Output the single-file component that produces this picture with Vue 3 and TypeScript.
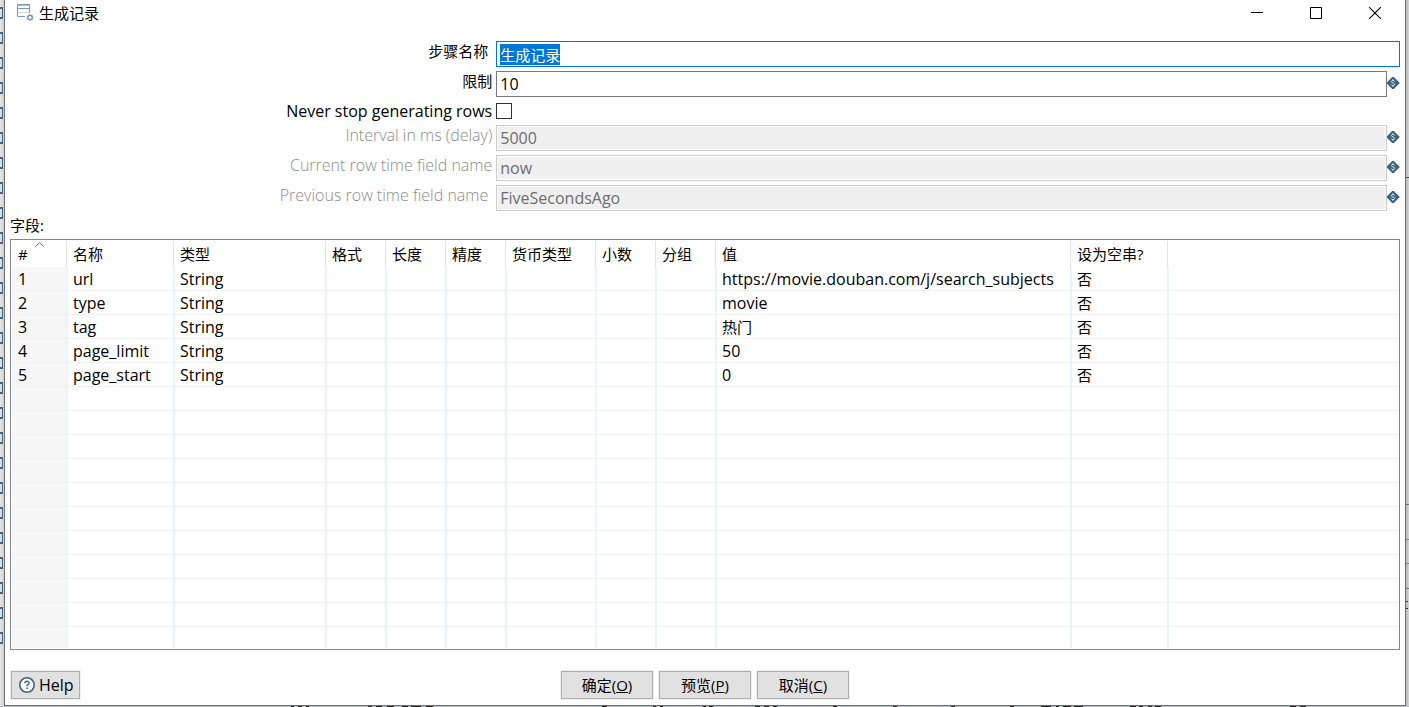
<script setup lang="ts">
import { onMounted, ref } from 'vue'

interface Column {
  key: string
  title: string
}
type Row = Record<string, string>

const columns: Column[] = [
  { key: 'num', title: '#' },
  { key: 'name', title: '名称' },
  { key: 'type', title: '类型' },
  { key: 'format', title: '格式' },
  { key: 'length', title: '长度' },
  { key: 'precision', title: '精度' },
  { key: 'currency', title: '货币类型' },
  { key: 'decimal', title: '小数' },
  { key: 'group', title: '分组' },
  { key: 'value', title: '值' },
  { key: 'empty', title: '设为空串?' },
  { key: 'rest', title: '' },
]

const fields: Row[] = [
  { num: '1', name: 'url', type: 'String', value: 'https://movie.douban.com/j/search_subjects', empty: '否' },
  { num: '2', name: 'type', type: 'String', value: 'movie', empty: '否' },
  { num: '3', name: 'tag', type: 'String', value: '热门', empty: '否' },
  { num: '4', name: 'page_limit', type: 'String', value: '50', empty: '否' },
  { num: '5', name: 'page_start', type: 'String', value: '0', empty: '否' },
]
const blankRows: Row[] = Array.from({ length: 11 }, () => ({}))
const rows: Row[] = [...fields, ...blankRows]

const isLatin = (text: string | undefined): boolean => /^[\x20-\x7e]+$/.test(text ?? '')

const stepName = ref('生成记录')
const limit = ref('10')
const neverStop = ref(false)
const timing = ref([
  { id: 'interval', label: 'Interval in ms (delay)', value: '5000', inset: false },
  { id: 'current', label: 'Current row time field name', value: 'now', inset: false },
  { id: 'previous', label: 'Previous row time field name', value: 'FiveSecondsAgo', inset: true },
])

const actions = [
  { text: '确定', key: 'O' },
  { text: '预览', key: 'P' },
  { text: '取消', key: 'C' },
]

const nameInput = ref<HTMLInputElement | null>(null)
onMounted(() => {
  nameInput.value?.focus()
  nameInput.value?.select()
})
</script>

<template>
  <div class="desktop">
    <div class="strip-left" aria-hidden="true">
      <i v-for="n in 26" :key="n"></i>
    </div>

    <main class="dialog">
      <header class="titlebar">
        <svg class="app-icon" width="18" height="18" viewBox="0 0 18 18" fill="none">
          <path d="M8 12.500H.5V.5H12.500V8.500" stroke="#7d9bb0" />
          <path d="M1 1.500H12" stroke="#a9bfcd" />
          <path d="M1 4.500H12" stroke="#7d9bb0" />
          <path d="M1 8.500H12" stroke="#d0dae1" />
          <circle cx="13" cy="13.500" r="2.300" stroke="#6f93ac" stroke-width="1.400" />
          <path d="M13 10v1M13 16v1M9.500 13.500h1M15.500 13.500h1M10.600 11l.7.7M15 15.400l.7.7M10.600 16l.7-.7M15 11.700l.7-.7" stroke="#8fabbe" />
        </svg>
        <h1>生成记录</h1>
        <div class="window-buttons">
          <button type="button" aria-label="最小化">
            <svg width="12" height="12" viewBox="0 0 12 12"><path d="M0 5.500H12" stroke="#000" /></svg>
          </button>
          <button type="button" aria-label="最大化">
            <svg width="12" height="12" viewBox="0 0 12 12"><path d="M.5.5H11.500V11.500H.5Z" fill="none" stroke="#000" /></svg>
          </button>
          <button type="button" aria-label="关闭">
            <svg width="12" height="12" viewBox="0 0 12 12"><path d="M0 0L12 12M12 0L0 12" stroke="#000" stroke-width="1.100" /></svg>
          </button>
        </div>
      </header>

      <form class="form" @submit.prevent>
        <div class="line">
          <label for="step" class="inset">步骤名称</label>
          <input id="step" ref="nameInput" v-model="stepName" type="text" />
        </div>
        <div class="line">
          <label for="limit">限制</label>
          <input id="limit" v-model="limit" type="text" class="latin" />
          <svg class="var" width="13" height="12" viewBox="0 0 13 12">
            <path d="M6 0L12 6L6 12L0 6Z" fill="#3d6480" stroke="#3d6480" stroke-width="1.200" stroke-linejoin="round" />
            <path d="M7.700 4.500C7.300 3 4.400 3 4.400 4.600C4.400 6.200 7.600 5.700 7.600 7.400C7.600 9 4.600 9 4.200 7.500M6 2.200V3.400M6 8.600V9.800" fill="none" stroke="#dce6ed" stroke-width="1" />
          </svg>
        </div>
        <div class="line check">
          <label for="never" class="latin">Never stop generating rows</label>
          <input id="never" v-model="neverStop" type="checkbox" />
        </div>
        <div v-for="t in timing" :key="t.id" class="line off">
          <label :for="t.id" class="latin" :class="{ inset: t.inset }">{{ t.label }}</label>
          <input :id="t.id" v-model="t.value" type="text" class="latin" disabled />
          <svg class="var" width="13" height="12" viewBox="0 0 13 12">
            <path d="M6 0L12 6L6 12L0 6Z" fill="#3d6480" stroke="#3d6480" stroke-width="1.200" stroke-linejoin="round" />
            <path d="M7.700 4.500C7.300 3 4.400 3 4.400 4.600C4.400 6.200 7.600 5.700 7.600 7.400C7.600 9 4.600 9 4.200 7.500M6 2.200V3.400M6 8.600V9.800" fill="none" stroke="#dce6ed" stroke-width="1" />
          </svg>
        </div>
      </form>

      <h2 id="fields-title">字段:</h2>
      <section class="grid-box">
        <div class="grid-clip">
          <table aria-labelledby="fields-title">
            <colgroup>
              <col v-for="c in columns" :key="c.key" :class="'c-' + c.key" />
            </colgroup>
            <thead>
              <tr>
                <th v-for="c in columns" :key="c.key" scope="col">
                  {{ c.title }}
                  <svg v-if="c.key === 'num'" class="sort" width="9" height="5" viewBox="0 0 9 5">
                    <path d="M.5 4.500L4.500.7L8.500 4.500" fill="none" stroke="#6a6a6a" />
                  </svg>
                </th>
              </tr>
            </thead>
            <tbody>
              <tr v-for="(r, i) in rows" :key="i">
                <td v-for="c in columns" :key="c.key" :class="{ latin: isLatin(r[c.key]) }">{{ r[c.key] }}</td>
              </tr>
            </tbody>
          </table>
        </div>
      </section>

      <footer class="footer">
        <button type="button" class="btn help latin">
          <svg width="16" height="16" viewBox="0 0 16 16" fill="none">
            <circle cx="8" cy="8" r="7.200" fill="#fff" stroke="#3d6480" stroke-width="1.600" />
            <path d="M5.900 6.300C5.900 3.600 10.100 3.700 10.100 6.100C10.100 7.600 8 7.500 8 9.300" stroke="#3d6480" stroke-width="1.500" />
            <path d="M8 10.500V12" stroke="#3d6480" stroke-width="1.600" />
          </svg>
          Help
        </button>
        <div class="actions">
          <button v-for="a in actions" :key="a.key" type="button" class="btn">{{ a.text }}(<u>{{ a.key }}</u>)</button>
        </div>
      </footer>
    </main>

    <div class="strip-right" aria-hidden="true"></div>
    <svg class="strip-bottom" viewBox="0 0 1409 1" preserveAspectRatio="none" aria-hidden="true">
      <path
        d="M291 .5h3m4 0h4m4 0h3m59 0h4m4 0h6m5 0h7m8 0h6m3 0h10m5 0h7M602 .5h5m46 0h3m4 0h3m40 0h3m3 0h4m42 0h5m4 0h5m4 0h4m56 0h4m56 0h4m54 0h4m55 0h4M1041 .5h10m5 0h3m4 0h8m3 0h9M1130 .5h6m3 0h4m5 0h4m3 0h6M1290 .5h6m4 0h6"
        stroke="#222"
      />
    </svg>
  </div>
</template>

<style>
body {
  overflow: hidden;
}
</style>

<style scoped>
.desktop {
  box-sizing: border-box;
  height: 100vh;
  display: grid;
  grid-template-columns: 4px 1fr 3px;
  grid-template-rows: 1fr 1px;
  font: 15px/20px 'Open Sans', 'Noto Sans CJK SC', sans-serif;
  color: #000;
  background: #b9bec3;
}
.strip-left {
  display: flex;
  flex-direction: column;
  gap: 13px;
  padding-top: 7px;
  background: linear-gradient(to right, #e6e6e6, #cfcfcf);
  overflow: hidden;
}
.strip-left i {
  box-sizing: border-box;
  flex: none;
  width: 3px;
  height: 12px;
  border: solid #45647c;
  border-width: 2px 1px 2px 0;
  background: #d5e0e8;
}
.strip-right {
  background:
    linear-gradient(#3f4f60, #3f4f60) 0 177px / 3px 1px no-repeat,
    linear-gradient(#777, #777) 0 504px / 3px 1px no-repeat,
    linear-gradient(#888, #888) 0 539px / 3px 1px no-repeat,
    linear-gradient(#888, #888) 0 563px / 3px 1px no-repeat,
    linear-gradient(#777, #777) 0 588px / 3px 1px no-repeat,
    linear-gradient(#234, #234) 0 601px / 2px 1px no-repeat,
    linear-gradient(#234, #234) 0 608px / 2px 1px no-repeat,
    linear-gradient(to right, #b8b8b8, #d4d4d4);
}
.strip-bottom {
  grid-column: 1 / -1;
  width: 100%;
  height: 1px;
  display: block;
}
.dialog {
  min-width: 0;
  min-height: 0;
  display: flex;
  flex-direction: column;
  background: #fff;
  border: 1px solid #6e6e6e;
  border-top: 0;
}
.titlebar {
  flex: none;
  display: flex;
  align-items: center;
  height: 26px;
  padding-left: 12px;
}
.app-icon {
  margin-right: 4px;
}
h1,
h2 {
  margin: 0;
  font-size: 15px;
  line-height: 20px;
  font-weight: 400;
}
.window-buttons {
  display: flex;
  margin-left: auto;
  padding-right: 1px;
}
.window-buttons button {
  display: grid;
  place-items: center;
  width: 59px;
  height: 26px;
  padding: 0;
  border: 0;
  background: none;
}
.form {
  flex: none;
  display: flex;
  flex-direction: column;
  gap: 4px;
  padding: 15px 5px 0 0;
}
.line {
  display: flex;
  align-items: flex-start;
  min-height: 26px;
}
.line label {
  box-sizing: border-box;
  flex: none;
  width: 35%;
  padding-right: 1px;
  text-align: right;
}
.line label.inset {
  padding-right: 5px;
}
.line input[type='text'] {
  box-sizing: border-box;
  flex: 1;
  min-width: 0;
  height: 26px;
  margin: 0 0 0 3px;
  padding: 2px 3px;
  border: 1px solid #7a7a7a;
  border-radius: 0;
  outline: 0;
  background: #fff;
  color: #000;
  font: inherit;
}
.line input[type='text']:focus {
  border-color: #0078d7;
}
.line input::selection {
  background: #0078d7;
  color: #fff;
}
.line input[type='text']:disabled {
  border-color: #ccc;
  background: #f0f0f0;
  box-shadow: inset 0 0 0 1px #fff;
  color: #6d6d6d;
}
.line.check {
  min-height: 20px;
}
.line.check input {
  appearance: none;
  box-sizing: border-box;
  width: 16px;
  height: 16px;
  margin: 2px 0 0 3px;
  border: 1px solid #333;
  background: #fff;
}
.off label {
  color: #8c8c8c;
  font-weight: 300;
}
.var {
  flex: none;
  margin-top: 6px;
}
h2 {
  flex: none;
  padding: 4px 5px;
}
.grid-box {
  flex: 1;
  min-height: 0;
  display: flex;
  margin: 0 5px;
  padding: 0 1px 1px 0;
  border: 1px solid #828790;
}
.grid-clip {
  flex: 1;
  min-width: 0;
  overflow: hidden;
}
table {
  width: 100%;
  table-layout: fixed;
  border-collapse: separate;
  border-spacing: 0;
}
.c-num { width: 57px; }
.c-name { width: 107px; }
.c-type { width: 152px; }
.c-format,
.c-length,
.c-precision,
.c-decimal,
.c-group { width: 60px; }
.c-currency { width: 90px; }
.c-value { width: 355px; }
.c-empty { width: 97px; }
th,
td {
  box-sizing: border-box;
  padding: 0 0 0 5px;
  font-weight: 400;
  text-align: left;
  vertical-align: middle;
  white-space: nowrap;
}
th {
  position: relative;
  height: 27px;
  background: linear-gradient(#e2e2e2, #e2e2e2) right 1px top 1px / 1px 26px no-repeat;
}
td {
  height: 24px;
  padding-top: 1px;
  border-right: 2px solid #edf1f8;
  border-bottom: 1px solid #f0f0f0;
  line-height: 22px;
}
th:first-child,
td:first-child {
  padding-left: 7px;
}
td:first-child {
  background: #f7f7f7;
  border-left: 1px solid #fff;
  padding-left: 6px;
}
th:last-child {
  background: none;
}
td:last-child {
  border-right: 0;
}
.sort {
  position: absolute;
  top: 2px;
  left: 24px;
}
.footer {
  flex: none;
  display: grid;
  grid-template-columns: 1fr auto 1fr;
  padding: 21px 6px 6px;
}
.btn {
  box-sizing: border-box;
  height: 28px;
  min-width: 92px;
  padding: 0;
  border: 1px solid #adadad;
  outline: 1px solid #f0f0f0;
  background: #e1e1e1;
  color: #000;
  font: inherit;
}
.help {
  justify-self: start;
  display: flex;
  align-items: center;
  gap: 4px;
  min-width: 69px;
  padding: 0 5px 0 7px;
}
.actions {
  display: flex;
  gap: 6px;
}
.latin,
.line input.latin[type='text'] {
  font-size: 16px;
}
</style>
